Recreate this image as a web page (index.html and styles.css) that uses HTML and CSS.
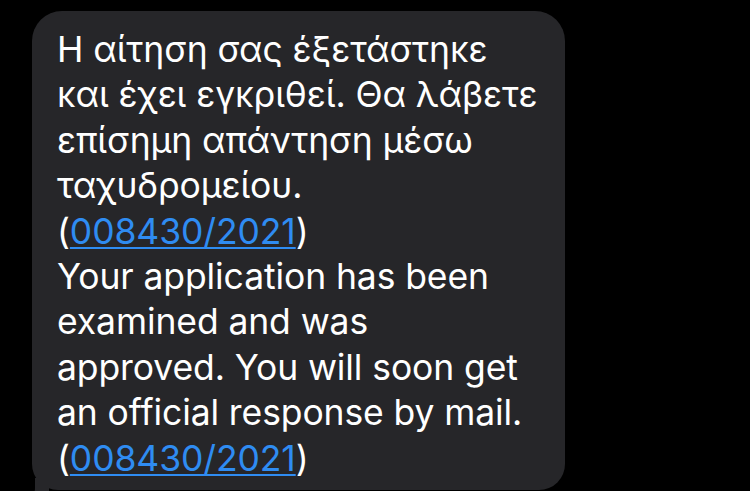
FILE: index.html
```html
<!DOCTYPE html>
<html lang="el">
<head>
<meta charset="utf-8">
<link rel="stylesheet" href="styles.css">
</head>
<body>
<div class="thread">
  <div class="bubble">
    <p class="msg">Η αίτηση σας έξετάστηκε<br>και έχει εγκριθεί. Θα λάβετε<br>επίσημη απάντηση μέσω<br>ταχυδρομείου.<br>(<a class="link" href="#">008430/2021</a>)<br>Your application has been<br>examined and was<br>approved. You will soon get<br>an official response by mail.<br>(<a class="link" href="#">008430/2021</a>)</p>
    <svg class="tail" width="30" height="24" viewBox="0 0 30 24"><path d="M8 0 L8 10 Q8 18 0 22 Q12 24 22 14 L22 0 Z" fill="#262629"/></svg>
  </div>
</div>
</body>
</html>
```
FILE: styles.css
```css
html, body {
  margin: 0;
  padding: 0;
  background: #000;
  height: 100%;
  overflow: hidden;
}
.thread {
  padding: 11px 0 0 32px;
}
.bubble {
  position: relative;
  width: 533px;
  height: 479px;
  box-sizing: border-box;
  background: #262629;
  border-radius: 30px 30px 26px 26px;
  padding: 16px 0 0 25px;
}
.msg {
  margin: 0;
  font-family: "Inter", "Noto Sans", sans-serif;
  font-size: 35.5px;
  line-height: 45.4px;
  letter-spacing: -0.1px;
  color: #fff;
  white-space: nowrap;
}
.link {
  color: #2f8cf2;
  text-decoration: underline;
  text-decoration-thickness: 2px;
  text-underline-offset: 3px;
}
.tail {
  position: absolute;
  left: -5px;
  bottom: -12px;
}
```
